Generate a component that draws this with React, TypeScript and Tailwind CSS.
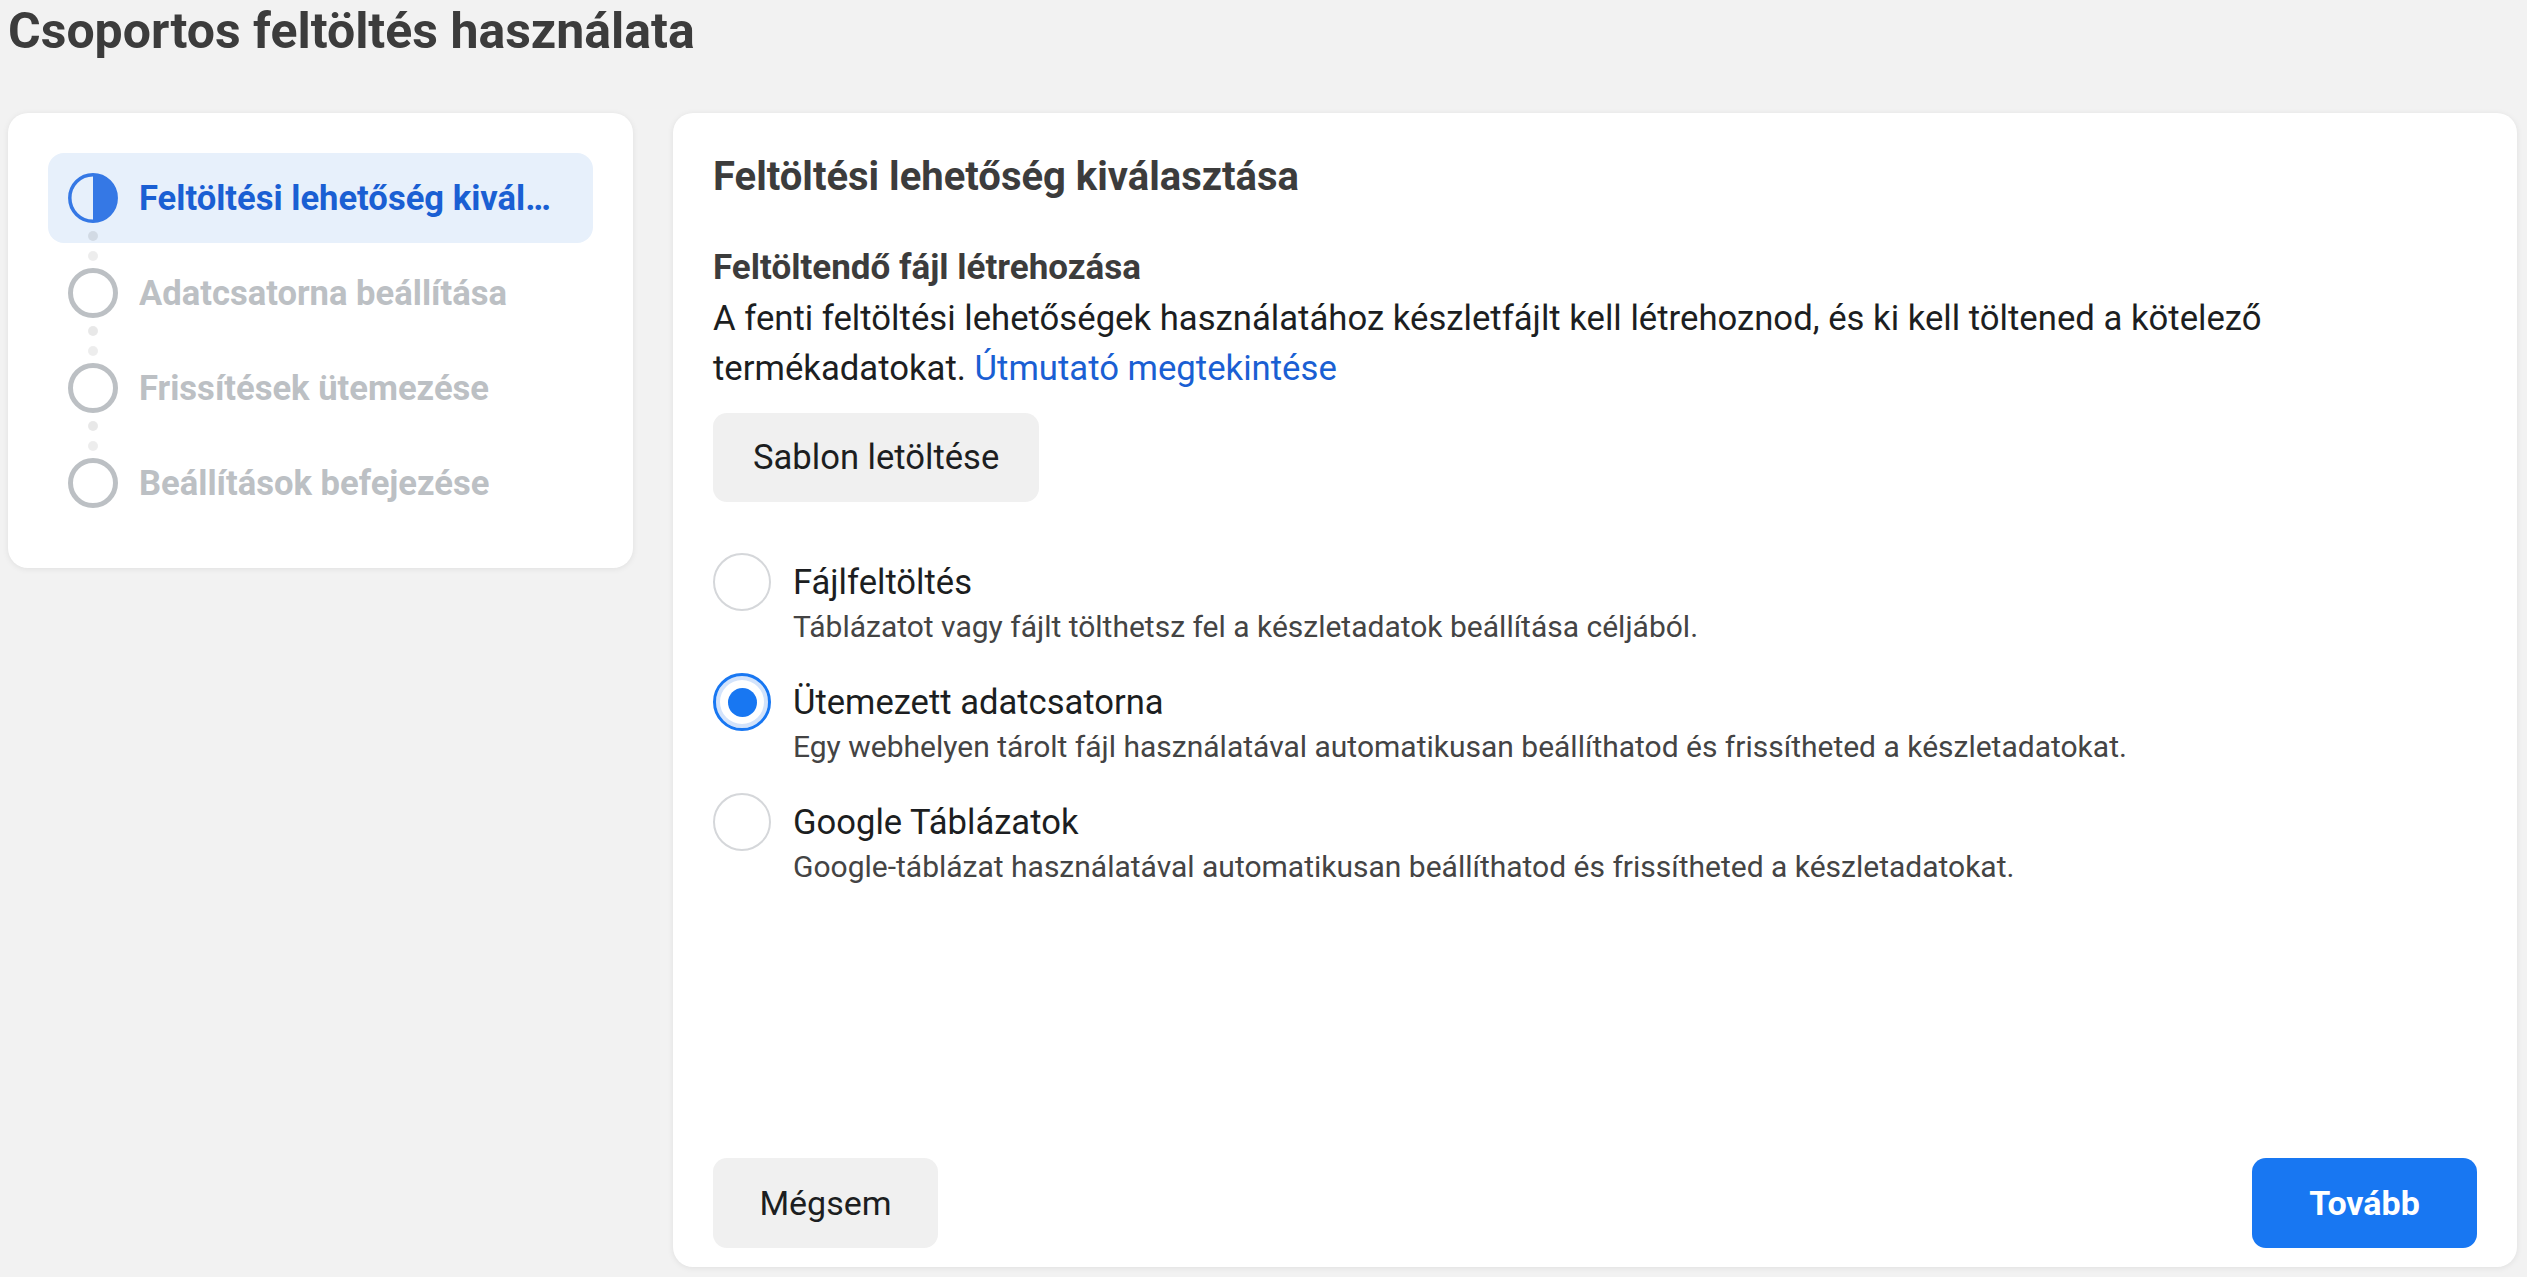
import React from 'react';

// Steps of the wizard
const steps: string[] = [
  'Feltöltési lehetőség kiválasztása',
  'Adatcsatorna beállítása',
  'Frissítések ütemezése',
  'Beállítások befejezése',
];

// Upload options
const options = [
  {
    title: 'Fájlfeltöltés',
    desc: 'Táblázatot vagy fájlt tölthetsz fel a készletadatok beállítása céljából.',
  },
  {
    title: 'Ütemezett adatcsatorna',
    desc: 'Egy webhelyen tárolt fájl használatával automatikusan beállíthatod és frissítheted a készletadatokat.',
  },
  {
    title: 'Google Táblázatok',
    desc: 'Google-táblázat használatával automatikusan beállíthatod és frissítheted a készletadatokat.',
  },
];

const StepIcon: React.FC<{ active: boolean }> = ({ active }) =>
  active ? (
    <svg width="50" height="50" viewBox="0 0 50 50">
      <circle cx="25" cy="25" r="23.2" fill="none" stroke="#3578e5" strokeWidth="3.5" />
      <path d="M25 1.5 A23.5 23.5 0 0 1 25 48.5 Z" fill="#3578e5" />
    </svg>
  ) : (
    <svg width="50" height="50" viewBox="0 0 50 50">
      <circle cx="25" cy="25" r="22.5" fill="none" stroke="#bcc0c4" strokeWidth="5" />
    </svg>
  );

const Radio: React.FC<{ checked: boolean }> = ({ checked }) =>
  checked ? (
    <div className="-mt-1 flex h-[58px] w-[58px] shrink-0 items-center justify-center rounded-full border-[3px] border-[#1877f2] shadow-[inset_0_0_0_4px_#d3e3fb]">
      <div className="h-[29px] w-[29px] rounded-full bg-[#1877f2]" />
    </div>
  ) : (
    <div className="-mt-1 h-[58px] w-[58px] shrink-0 rounded-full border-2 border-[#d5d7da]" />
  );

const App: React.FC = () => {
  return (
    <div className="flex h-screen flex-col bg-[#f2f2f2] pl-2 pr-[10px] pb-[10px] font-['Roboto',sans-serif]">
      {/* Page title */}
      <h1 className="pt-[2px] text-[50px] font-bold leading-[58px] text-[#3c3c3c]">
        Csoportos feltöltés használata
      </h1>

      <div className="mt-[53px] flex min-h-0 flex-1 items-start gap-10">
        {/* Steps card */}
        <aside className="w-[625px] shrink-0 rounded-[20px] bg-white p-10 shadow-[0_1px_6px_rgba(0,0,0,0.08)]">
          <div className="flex flex-col gap-[5px]">
            {steps.map((step, i) => {
              const active = i === 0;
              return (
                <div
                  key={step}
                  className={
                    active
                      ? 'flex h-[90px] items-center gap-[21px] rounded-2xl bg-[#e7f0fb] pl-5 pr-8'
                      : 'flex h-[90px] items-center gap-[21px] rounded-2xl pl-5 pr-8'
                  }
                >
                  <div className="relative h-[50px] w-[50px] shrink-0">
                    <StepIcon active={active} />
                    {i < steps.length - 1 && (
                      <div className="absolute left-[20px] top-[58px] flex flex-col gap-[10px]">
                        <span className="h-[10px] w-[10px] rounded-full bg-black/[0.09]" />
                        <span className="h-[10px] w-[10px] rounded-full bg-black/[0.07]" />
                      </div>
                    )}
                  </div>
                  <span
                    className={
                      active
                        ? 'truncate text-[34.6px] font-bold leading-[44px] text-[#1a5fd3]'
                        : 'truncate text-[34.6px] font-bold leading-[44px] text-[#bcc0c4]'
                    }
                  >
                    {step}
                  </span>
                </div>
              );
            })}
          </div>
        </aside>

        {/* Main card */}
        <section className="flex flex-1 flex-col self-stretch rounded-[20px] bg-white px-10 pt-10 pb-[19px] shadow-[0_1px_6px_rgba(0,0,0,0.08)]">
          <h2 className="text-[40px] font-bold leading-[48px] text-[#3c3c3c]">
            Feltöltési lehetőség kiválasztása
          </h2>

          <h3 className="mt-[42px] text-[35px] font-bold leading-[50px] text-[#3c3c3c]">
            Feltöltendő fájl létrehozása
          </h3>
          <p className="text-[34.7px] leading-[50px] text-[#1c1e21]">
            A fenti feltöltési lehetőségek használatához készletfájlt kell létrehoznod, és ki kell
            töltened a kötelező termékadatokat.{' '}
            <span className="text-[#1a5fd3]">Útmutató megtekintése</span>
          </p>

          <button className="mt-5 h-[89px] self-start rounded-[14px] bg-[#f0f0f0] px-10 text-[34.6px] text-[#1c1e21]">
            Sablon letöltése
          </button>

          {/* Options */}
          <div className="mt-[55px] flex flex-col gap-[30px]">
            {options.map((opt, i) => (
              <div key={opt.title} className="flex gap-[22px]">
                <Radio checked={i === 1} />
                <div>
                  <div className="text-[34.6px] leading-[50px] text-[#1c1e21]">{opt.title}</div>
                  <div className="text-[30px] leading-[40px] text-[#444]">{opt.desc}</div>
                </div>
              </div>
            ))}
          </div>

          {/* Footer buttons */}
          <div className="mt-auto flex justify-between">
            <button className="h-[90px] w-[225px] rounded-[14px] bg-[#f0f0f0] text-[34px] text-[#1c1e21]">
              Mégsem
            </button>
            <button className="h-[90px] w-[225px] rounded-[14px] bg-[#1877f2] text-[34px] font-bold text-white">
              Tovább
            </button>
          </div>
        </section>
      </div>
    </div>
  );
};

export default App;
